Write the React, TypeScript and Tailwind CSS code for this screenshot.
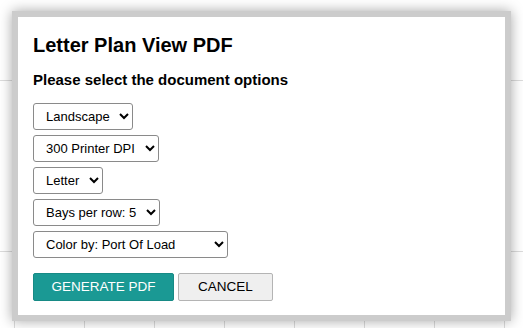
import React from 'react';

const selects: { label: string; width: string }[] = [
  { label: 'Landscape', width: 'w-[100px]' },
  { label: '300 Printer DPI', width: 'w-[126px]' },
  { label: 'Letter', width: 'w-[70px]' },
  { label: 'Bays per row: 5', width: 'w-[127px]' },
  { label: 'Color by: Port Of Load', width: 'w-[195px]' },
];

const App: React.FC = () => {
  return (
    <div className="relative w-[523px] h-[328px] overflow-hidden bg-white font-['Liberation_Sans',Arial,sans-serif]">
      {/* table behind the dialog */}
      <div className="flex flex-col">
        <div className="h-[81px] border-b border-[#dcdcdc]" />
        <div className="h-[171px] border-b border-[#dcdcdc]" />
        <div className="flex h-[80px] pl-[14px]">
          {Array.from({ length: 8 }).map((_, i) => (
            <div key={i} className="w-[70px] shrink-0 border-l border-[#dcdcdc]" />
          ))}
        </div>
      </div>

      {/* dialog */}
      <div className="absolute left-[12px] top-[11px] w-[499px] h-[310px] border-[6px] border-[#cccccc] bg-white shadow-[0_0_12px_rgba(0,0,0,0.35)]">
        <div className="pl-[15px] pt-[16px]">
          <h1 className="text-[20px] leading-[24px] font-bold text-black">Letter Plan View PDF</h1>
          <p className="mt-[14px] text-[15px] leading-[18px] font-bold text-black">Please select the document options</p>
          <div className="mt-[14px] flex flex-col gap-[5px]">
            {selects.map((s) => (
              <select
                key={s.label}
                defaultValue={s.label}
                className={`${s.width} h-[27px] pl-[8px] pr-[4px] text-[13px] text-black bg-white border border-[#8a8a8a] rounded-[3px]`}
              >
                <option>{s.label}</option>
              </select>
            ))}
          </div>
          <div className="mt-[15px] flex gap-[4px]">
            <button className="w-[141px] h-[28px] bg-[#1a9994] text-white text-[13.5px] rounded-[2px] border border-[#178a85]">
              GENERATE PDF
            </button>
            <button className="w-[95px] h-[28px] bg-[#efefef] text-black text-[13.5px] rounded-[2px] border border-[#b4b4b4]">
              CANCEL
            </button>
          </div>
        </div>
      </div>
    </div>
  );
};

export default App;
